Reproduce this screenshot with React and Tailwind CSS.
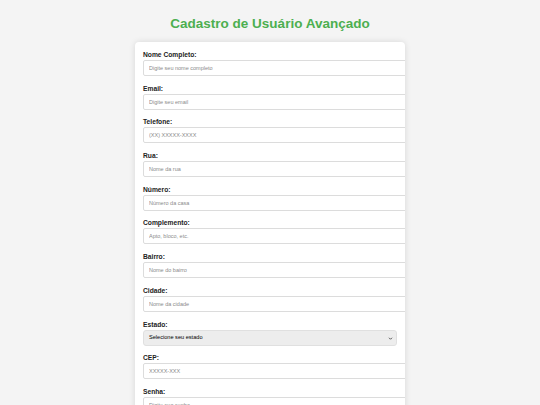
const fields = [
  { label: "Nome Completo:", placeholder: "Digite seu nome completo" },
  { label: "Email:", placeholder: "Digite seu email" },
  { label: "Telefone:", placeholder: "(XX) XXXXX-XXXX" },
  { label: "Rua:", placeholder: "Nome da rua" },
  { label: "Número:", placeholder: "Número da casa" },
  { label: "Complemento:", placeholder: "Apto, bloco, etc." },
  { label: "Bairro:", placeholder: "Nome do bairro" },
  { label: "Cidade:", placeholder: "Nome da cidade" },
  { label: "Estado:", select: true },
  { label: "CEP:", placeholder: "XXXXX-XXX" },
  { label: "Senha:", placeholder: "Digite sua senha" },
  { label: "Confirmar Senha:", placeholder: "Confirme sua senha" },
];

const App = () => {
  return (
    <div className="min-h-screen bg-[#f4f4f4] font-['Liberation_Sans',Arial,sans-serif] pt-[16px]">
      <h1 className="text-center text-[13.5px] leading-[16px] font-bold text-[#4caf50] mb-[10px]">
        Cadastro de Usuário Avançado
      </h1>

      <div className="w-[270px] mx-auto bg-white rounded-[4px] shadow-[0_0_6px_rgba(0,0,0,0.12)] px-[8px] pt-[8px] pb-[8px] overflow-hidden">
        {fields.map((f) => (
          <div key={f.label} className="mb-[7.7px]">
            <label className="block text-[6.7px] leading-[9px] font-bold text-[#222] mb-[1px]">
              {f.label}
            </label>
            {f.select ? (
              <div className="relative h-[16px] w-full rounded-[3px] bg-[#ededed] border border-[#e0e0e0] flex items-center pl-[5px]">
                <span className="text-[5.6px] text-black">Selecione seu estado</span>
                <svg
                  className="absolute right-[3px] top-[5px]"
                  width="5"
                  height="5"
                  viewBox="0 0 10 10"
                  fill="none"
                >
                  <path d="M2 3.5 L5 6.5 L8 3.5" stroke="#333" strokeWidth="1.6" />
                </svg>
              </div>
            ) : (
              <input
                type="text"
                placeholder={f.placeholder}
                className="block h-[16px] w-[calc(100%+20px)] rounded-[2px] border border-[#dcdcdc] bg-white px-[5px] text-[5.5px] placeholder:text-[#8a8a8a] outline-none"
              />
            )}
          </div>
        ))}
      </div>
    </div>
  );
};

export default App;
